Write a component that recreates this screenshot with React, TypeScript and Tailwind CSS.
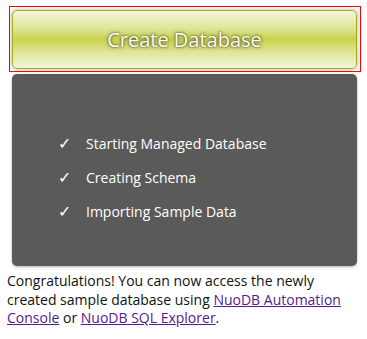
export default function App() {
  const steps = ['Starting Managed Database', 'Creating Schema', 'Importing Sample Data'];

  return (
    <div className="w-[367px] h-[339px] bg-white font-['Open_Sans',sans-serif]">
      <div className="pt-[6px] pl-[9px]">
        <div className="w-[352px] h-[66px] border border-[#ff0000] p-[2px]">
          <button
            type="button"
            className="w-[345px] h-[59px] mt-[1px] rounded-[5px] border border-[#a6ae1e] bg-[linear-gradient(to_bottom,#f3f5dd_0%,#dfe596_30%,#cbd34e_50%,#dfe596_72%,#f2f5dc_100%)] shadow-[0_0_4px_rgba(0,0,0,0.35)] text-[20px] text-white [text-shadow:0_0_2px_rgba(40,40,10,0.9),0_0_4px_rgba(60,60,20,0.6)]"
          >
            Create Database
          </button>
        </div>
      </div>

      <div className="ml-[12px] mt-[2px] w-[345px] h-[192px] rounded-[5px] bg-[#5a5a5a] shadow-[0_1px_3px_rgba(0,0,0,0.3)] pt-[52px]">
        <ul>
          {steps.map((s) => (
            <li key={s} className="flex items-center h-[34px] text-[14px] text-white">
              <span className="w-[74px] pl-[46px] text-[16px] leading-none">✓</span>
              <span>{s}</span>
            </li>
          ))}
        </ul>
      </div>

      <p className="px-[7px] pt-[6px] text-[14px] leading-[18.5px] text-[#111]">
        Congratulations! You can now access the newly created sample database using{' '}
        <a href="#" className="text-[#551a8b] underline">
          NuoDB Automation Console
        </a>{' '}
        or{' '}
        <a href="#" className="text-[#551a8b] underline">
          NuoDB SQL Explorer
        </a>
        .
      </p>
    </div>
  );
}
